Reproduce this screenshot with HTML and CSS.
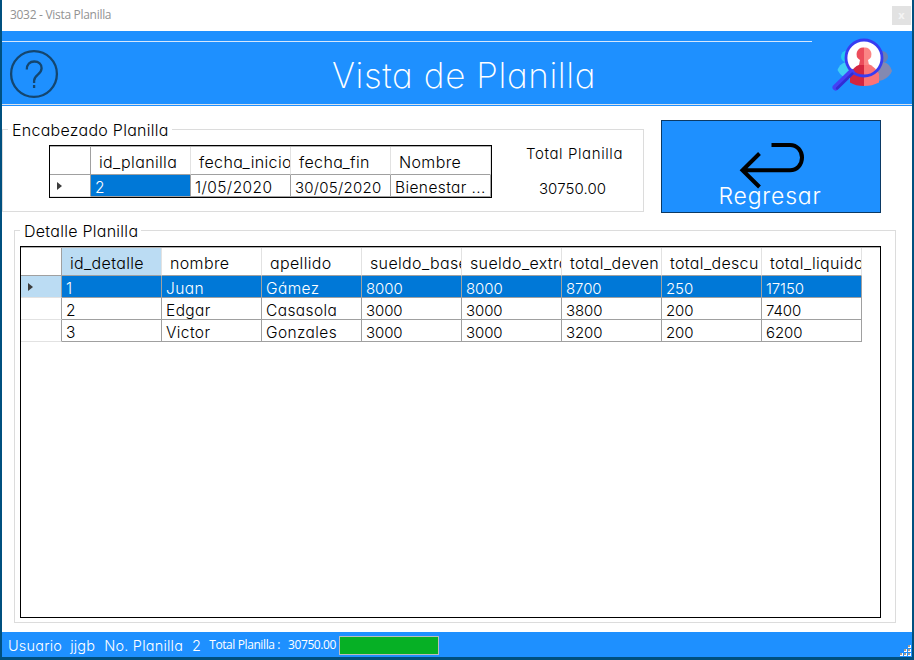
FILE: index.html
```
<!DOCTYPE html>
<html lang="es">
<head>
<meta charset="utf-8">
<title>3032 - Vista Planilla</title>
<link rel="stylesheet" href="styles.css">
</head>
<body>
<div class="window">
  <div class="titlebar"><span>3032 - Vista Planilla</span><button class="close">x</button></div>
  <header class="header">
    <svg class="help" viewBox="0 0 50 50"><circle cx="25" cy="25" r="22.9"/><path d="M17.8 20.5c0-5 3-8 7.5-8s7.3 2.900 7.300 6.700c0 6.300-7.500 6.400-7.500 12.600v2.200"/><path d="M25.100 36v3"/></svg>
    <h1>Vista de Planilla</h1>
    <svg class="logo" viewBox="0 0 64 56">
      <circle cx="16" cy="19.500" r="6" fill="#26c6f2"/><path d="M6.500 33c2-5 5-8 11-8l8 3-3 15c-8-1-13-4-16-10z" fill="#3fcdf5"/>
      <circle cx="51" cy="20" r="6" fill="#6b7fb2"/><path d="M61 34c-2-6-5-9-11-9l-7 20c9-1 15-4 18-11z" fill="#8489b1"/>
      <circle cx="33" cy="21" r="17.500" fill="#fff"/>
      <path d="M19 45.500V38c2-6 6-10 14-12v23c-6 0-10-1-14-3.500z" fill="#d42540"/><path d="M33 26c7 1 12 5 15 11v8.500c-5 2.500-9 3.500-15 3.500z" fill="#fb7376"/>
      <path d="M33 10.500a6.700 6.700 0 0 0-4 12.500l-1 5h5z" fill="#ec4c5b"/><path d="M33 10.500a6.700 6.700 0 0 1 4 12.500l1 5h-5z" fill="#fb8585"/>
      <circle cx="33" cy="21" r="18" fill="none" stroke="#373cf2" stroke-width="2.800"/>
      <path d="M20.500 35L4.500 50.500" stroke="#4440f5" stroke-width="6" stroke-linecap="round"/><path d="M21.500 36.500L6 51.500" stroke="#312cd4" stroke-width="2.500" stroke-linecap="round"/>
    </svg>
  </header>
  <div class="top">
    <fieldset class="summary">
      <legend>Encabezado Planilla</legend>
      <div class="grid master">
        <div class="row head"><b></b><span>id_planilla</span><span>fecha_inicio</span><span>fecha_fin</span><span>Nombre</span></div>
        <div class="row"><b><i></i></b><span class="selected">2</span><span>1/05/2020</span><span class="date">30/05/2020</span><span>Bienestar ...</span></div>
      </div>
      <div class="total"><span>Total Planilla</span><span class="num">30750.00</span></div>
    </fieldset>
    <button class="back"><svg viewBox="0 0 66 48"><path d="M33.500 3H52c7 0 12 5.500 12 12.600S59 28.300 52 28.300H5M21.500 11.500L4.500 28.300l17 16.700"/></svg><span>Regresar</span></button>
  </div>
  <fieldset class="details">
    <legend>Detalle Planilla</legend>
    <div class="grid detail">
      <div class="row head"><b></b><span class="current">id_detalle</span><span>nombre</span><span>apellido</span><span>sueldo_base</span><span>sueldo_extra</span><span>total_deven</span><span>total_descu</span><span>total_liquido</span></div>
      <div class="row active"><b><i></i></b><span>1</span><span>Juan</span><span>Gámez</span><span class="num">8000</span><span class="num">8000</span><span class="num">8700</span><span class="num">250</span><span class="num">17150</span></div>
      <div class="row"><b></b><span>2</span><span>Edgar</span><span>Casasola</span><span class="num">3000</span><span class="num">3000</span><span class="num">3800</span><span class="num">200</span><span class="num">7400</span></div>
      <div class="row"><b></b><span>3</span><span>Victor</span><span>Gonzales</span><span class="num">3000</span><span class="num">3000</span><span class="num">3200</span><span class="num">200</span><span class="num">6200</span></div>
    </div>
  </fieldset>
  <footer class="status">
    <span class="user">Usuario</span><span class="name">jjgb</span><span class="number">No. Planilla</span><span class="id">2</span><span class="small">Total Planilla :</span><span class="small">30750.00</span><div class="progress"></div>
    <svg class="grip" viewBox="0 0 12 12"><path fill="#fff" d="M9 1h3v3H9zM5 5h3v3H5zM9 5h3v3H9zM1 9h3v3H1zM5 9h3v3H5zM9 9h3v3H9z"/><path fill="#a39a90" d="M9 1h2v2H9zM5 5h2v2H5zM9 5h2v2H9zM1 9h2v2H1zM5 9h2v2H5zM9 9h2v2H9z"/></svg>
  </footer>
</div>
</body>
</html>
```
FILE: styles.css
```
* { box-sizing: border-box; }
body { margin: 0; height: 660px; padding: 0 2px 3px; overflow: hidden; background: #00507f; font: 300 15px/20px Inter, "Liberation Sans", sans-serif; font-feature-settings: "cv11"; color: #000; }
.window { width: 910px; height: 657px; background: #fff; display: flex; flex-direction: column; }
.titlebar { height: 31px; flex: none; display: flex; justify-content: space-between; padding: 6px 1px 6px 8px; font: 12px/17px "Open Sans", sans-serif; letter-spacing: -.3px; color: #929292; }
.close { width: 19px; height: 19px; padding: 0 0 2px; border: 0; background: #e2e2e2; color: #f4f4f4; font: bold 11px/16px "Open Sans", sans-serif; }
.header { height: 75px; flex: none; display: grid; grid-template-columns: 64px 1fr 94px; background: linear-gradient(#d5e7fc, #d5e7fc) 0 10px / 810px 1px no-repeat, linear-gradient(#dce3ec, #dce3ec) 0 73px / 100% 1px no-repeat, #1e90ff; }
.help { width: 50px; height: 50px; margin: 18px 0 0 7px; fill: none; stroke: #14466f; stroke-width: 2.300; }
h1 { margin: 21px 0 0 266px; font-size: 35px; line-height: 46px; font-weight: 200; color: #fff; letter-spacing: .6px; white-space: nowrap; }
.logo { width: 64px; height: 56px; margin: 6px 0 0 13px; }
.top { display: flex; height: 107px; flex: none; padding-top: 14px; }
fieldset { border: 1px solid #dcdcdc; margin: 0; padding: 0; min-width: 0; }
legend { padding: 0 3px 0 4px; height: 18px; line-height: 21px; white-space: nowrap; font-size: 16px; letter-spacing: .27px; }
.summary { width: 642px; height: 92px; display: flex; align-items: flex-start; }
.summary legend { margin-left: 5px; }
.grid { border: 1px solid #000; background: #fff; }
.row { display: flex; height: 22px; }
.row b { width: 41px; flex: none; border-right: 1px solid #a0a0a0; border-bottom: 1px solid #e2e2e2; display: flex; align-items: center; padding-left: 7px; }
.row i { border: 4.500px solid transparent; border-left: 5px solid #3c3c3c; border-right: 0; }
.row span { width: 100px; flex: none; overflow: hidden; white-space: nowrap; padding: 3px 0 0 4px; border-right: 1px solid #a0a0a0; border-bottom: 1px solid #a0a0a0; font-size: 15.500px; letter-spacing: .4px; }
.row .num { font-size: 15px; letter-spacing: -.1px; }
.row .date { font-size: 15px; letter-spacing: .25px; }
.row.head { height: 29px; border-top: 1px solid #b0b0b0; }
.row.head b { border-bottom-color: #a0a0a0; }
.row.head span { padding: 5px 0 0 8px; border-right-color: #e2e2e2; font-size: 16px; letter-spacing: .35px; }
.master { width: 443px; height: 53px; margin-left: 46px; margin-top: 7px; overflow: hidden; }
.row .selected, .row.active span { background: #0078d7; color: #fff; }
.row .current, .row.active b { background: #bbdcf3; }
.total { display: flex; flex-direction: column; align-items: center; gap: 15px; margin: 6px 0 0 34px; white-space: nowrap; letter-spacing: .6px; }
.total .num { letter-spacing: .1px; margin-right: 4px; }
.back { width: 220px; height: 93px; margin: 0 0 0 17px; padding: 0; border: 1px solid #0b3964; background: #1e90ff; display: flex; flex-direction: column; align-items: center; color: #fff; font: 300 23px/28px Inter, sans-serif; font-feature-settings: "cv11"; letter-spacing: .8px; }
.back svg { width: 66px; height: 48px; flex: none; margin: 21px 0 0; fill: none; stroke: #000; stroke-width: 4; }
.back span { margin: -8px 2px 0 0; }
.details { width: 882px; height: 402px; margin: 8px 0 0 12px; flex: none; }
.summary, .details { position: relative; }
.details legend { margin-left: 5px; }
.detail { width: 861px; height: 372px; margin: 7px 0 0 5px; }
.status { margin-top: auto; height: 25px; flex: none; display: flex; align-items: center; background: #1e90ff; color: #fff; padding-left: 6px; font-size: 14.500px; letter-spacing: .2px; white-space: nowrap; padding-top: 2px; }
.status .name { margin-left: 8px; }
.status .number { margin-left: 9px; }
.status .id { margin-left: 9px; }
.status .small { font: 12px/18px "Open Sans", sans-serif; letter-spacing: -.4px; margin: -2px 0 0 8px; }
.progress { width: 100px; height: 19px; margin: -1px 0 0 3px; background: #06b025; border: 1px solid #bcbcbc; }
.grip { width: 12px; height: 12px; margin: auto 1px 1px auto; }
```
